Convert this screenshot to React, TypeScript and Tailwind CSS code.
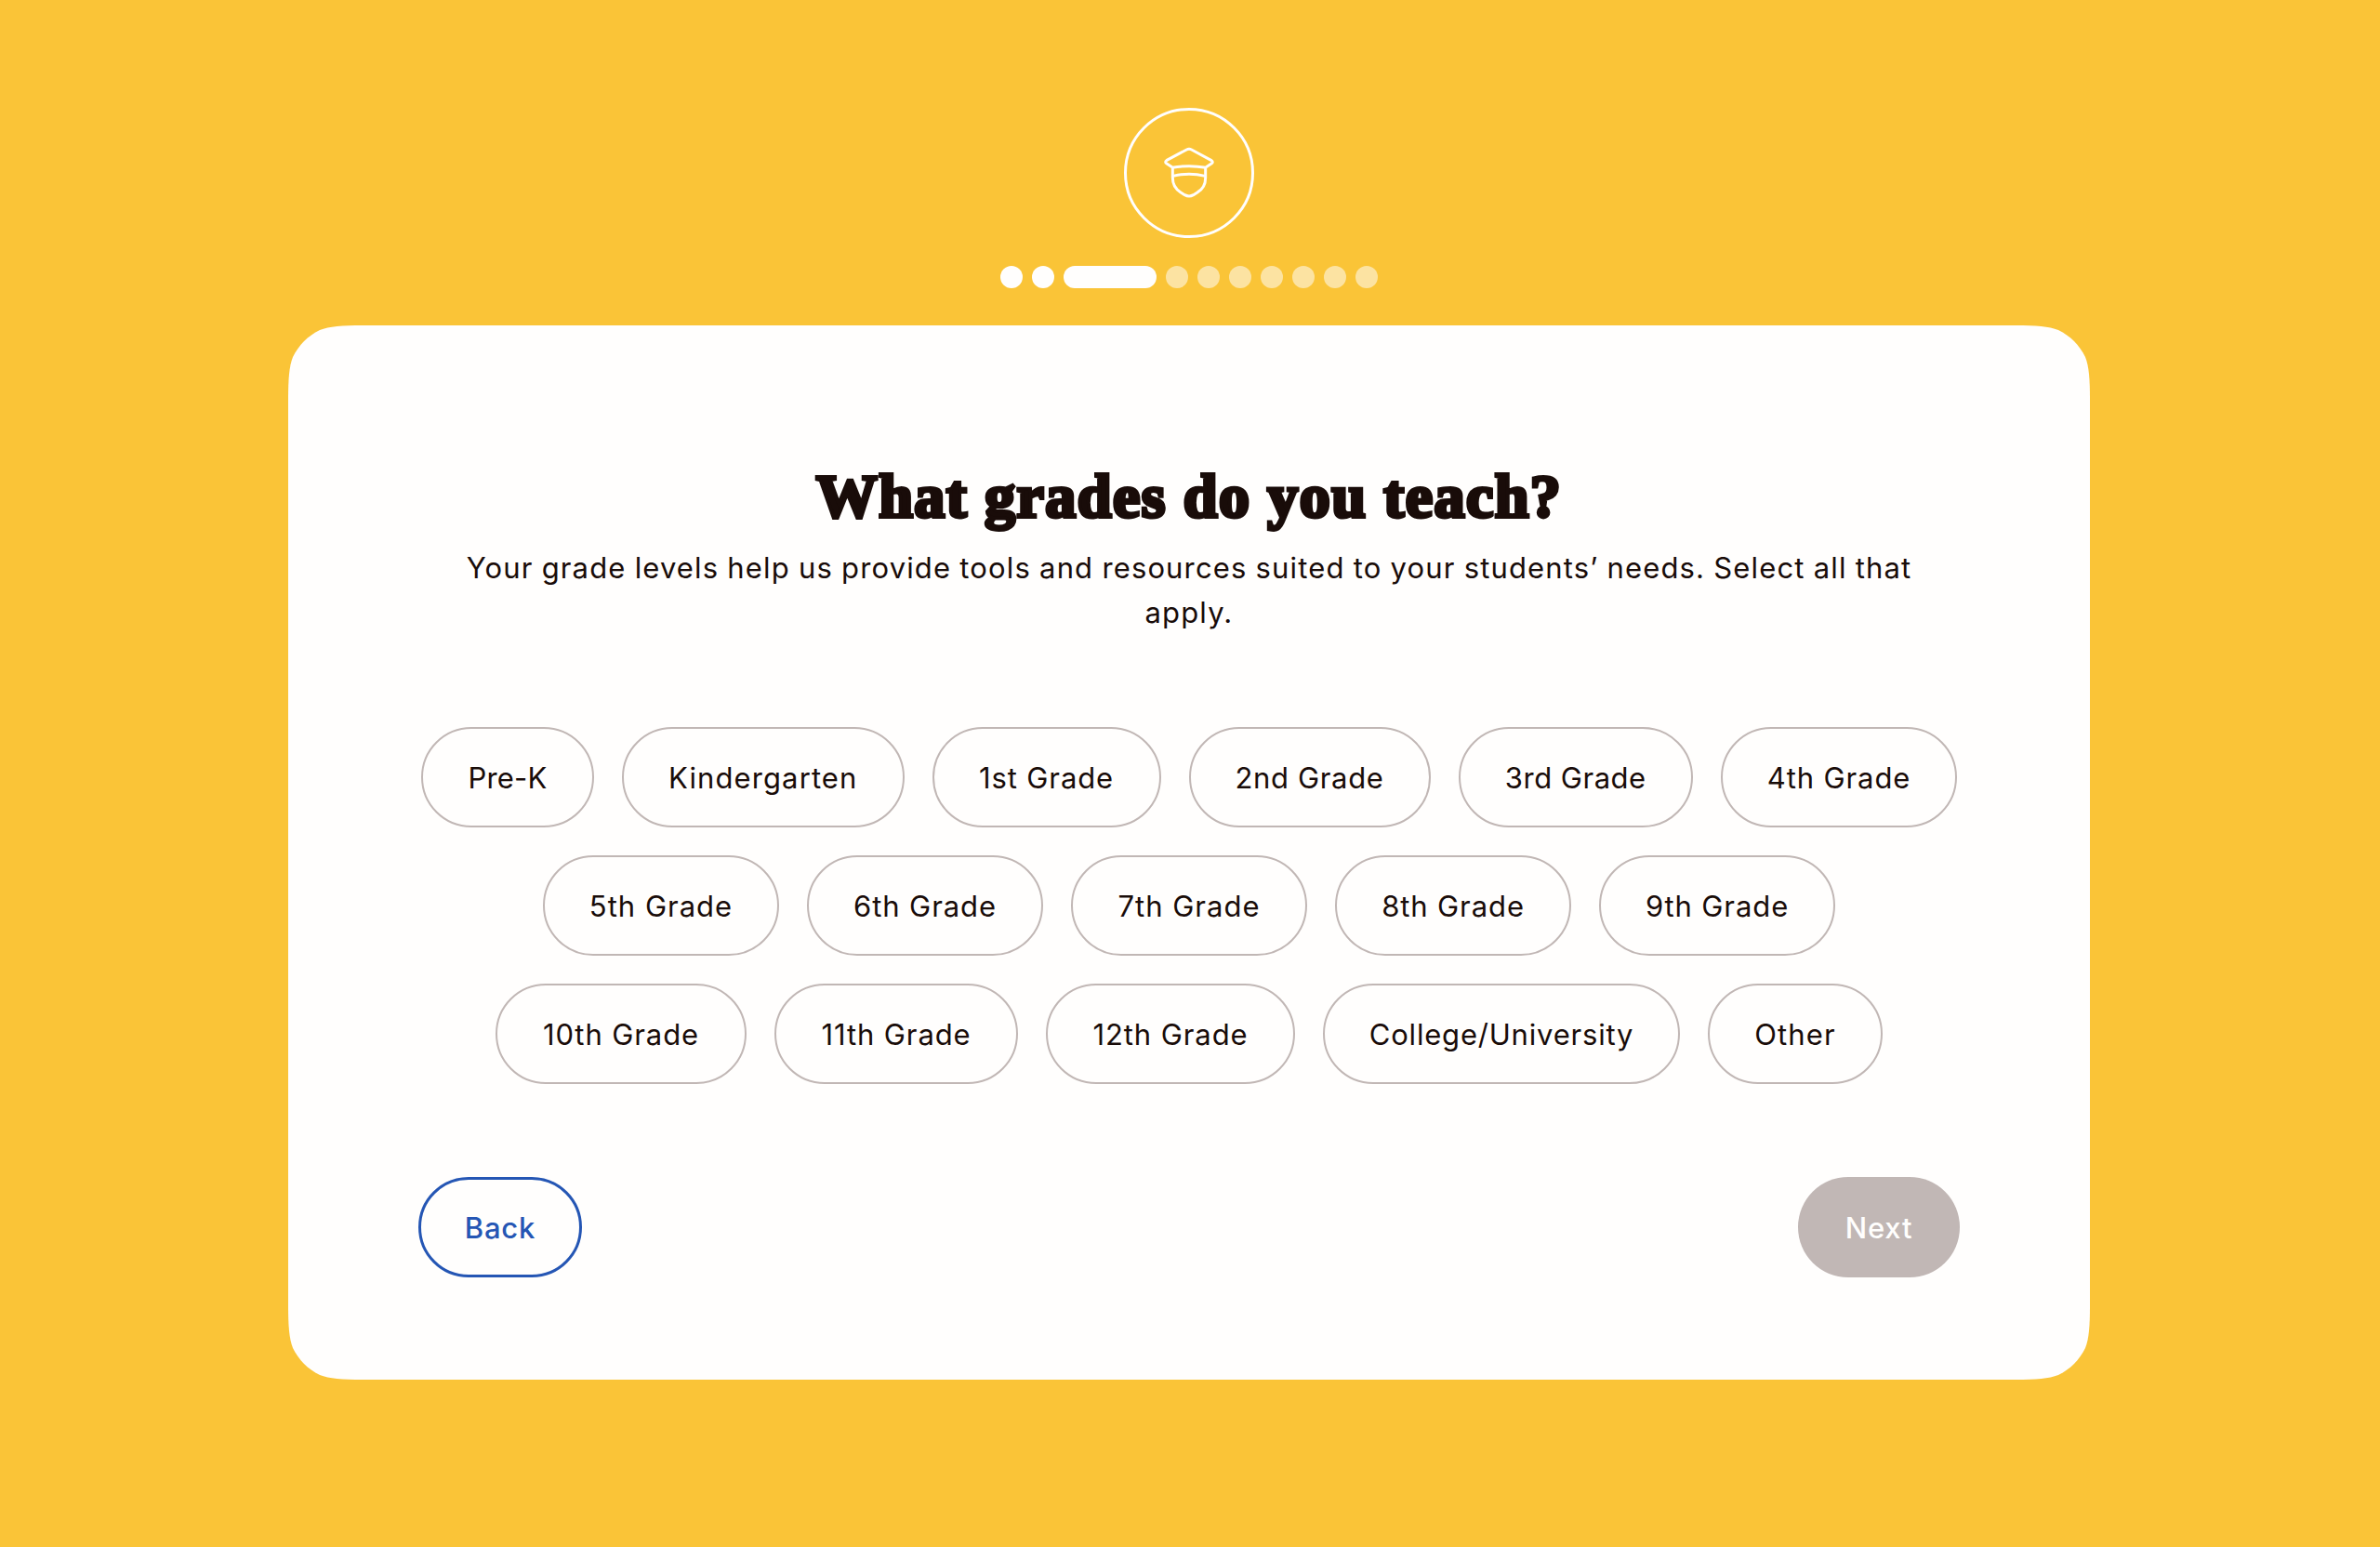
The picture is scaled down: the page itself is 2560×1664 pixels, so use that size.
type Grade = { label: string; className: string };

const gradeRows: Grade[][] = [
  [
    { label: "Pre-K", className: "w-[186px] tracking-[0.2px]" },
    { label: "Kindergarten", className: "w-[303.5px] tracking-[1.1px]" },
    { label: "1st Grade", className: "w-[246px] tracking-[0.9px]" },
    { label: "2nd Grade", className: "w-[260px] tracking-[0.65px]" },
    { label: "3rd Grade", className: "w-[252.5px] tracking-[0.5px]" },
    { label: "4th Grade", className: "w-[254px] tracking-[0.9px]" },
  ],
  [
    { label: "5th Grade", className: "w-[254px] tracking-[1px]" },
    { label: "6th Grade", className: "w-[254px] tracking-[0.9px]" },
    { label: "7th Grade", className: "w-[254px] tracking-[1px]" },
    { label: "8th Grade", className: "w-[254px] tracking-[0.9px]" },
    { label: "9th Grade", className: "w-[254px] tracking-[0.9px]" },
  ],
  [
    { label: "10th Grade", className: "w-[270px] tracking-[0.9px]" },
    { label: "11th Grade", className: "w-[262px] tracking-[0.9px]" },
    { label: "12th Grade", className: "w-[268px] tracking-[0.9px]" },
    { label: "College/University", className: "w-[384px] tracking-[0.8px]" },
    { label: "Other", className: "w-[188px] tracking-[1.1px]" },
  ],
];

const TOTAL_STEPS = 10;
const CURRENT_STEP = 2;

function TeacherBadge() {
  return (
    <svg
      className="size-[140px] text-[#fffefd]"
      viewBox="-108 -102 420 420"
      fill="none"
      stroke="currentColor"
      strokeWidth="9"
      strokeLinejoin="round"
    >
      <circle cx="102" cy="108" r="205.5" />
      <path d="M47 89L30 78Q22 73 30 67L94 33Q102 29 110 33L173 67Q182 73 174 78L157 89" />
      <path d="M48 91Q102 81 156 91" />
      <path d="M50 118Q102 105 154 118" />
      <path d="M49 88V124C49 147 58 160 74 170L88 179Q102 187 116 179L130 170C147 160 155 147 155 124V88" />
    </svg>
  );
}

function Progress() {
  return (
    <div className="mt-[30px] flex gap-2.5">
      {Array.from({ length: TOTAL_STEPS }, (_, i) => (
        <span
          key={i}
          className={
            i === CURRENT_STEP
              ? "h-6 w-25 rounded-full bg-[#fffefd]"
              : i < CURRENT_STEP
                ? "size-6 rounded-full bg-[#fffefd]"
                : "size-6 rounded-full bg-[#fce3a2]"
          }
        />
      ))}
    </div>
  );
}

export default function App() {
  return (
    <main className="flex h-[1664px] w-[2560px] flex-col items-center bg-[#fac437] pt-[116px] pr-0.5 font-['Inter',sans-serif] text-[31px] text-[#190c09]">
      <TeacherBadge />
      <Progress />
      <section className="mt-10 flex h-[1134px] w-[1938px] flex-col bg-[#fffefd] px-[140px] pt-[148px] [clip-path:path('M0_80C0_58_1_44_5_34C11.5_21_21_11.5_34_5C44_1_58_0_80_0H1858C1880_0_1894_1_1904_5C1917_11.5_1926.5_21_1933_34C1937_44_1938_58_1938_80V1054C1938_1076_1937_1090_1933_1100C1926.5_1113_1917_1122.5_1904_1129C1894_1133_1880_1134_1858_1134H80C58_1134_44_1133_34_1129C21_1122.5_11.5_1113_5_1100C1_1090_0_1076_0_1054Z')]">
        <h1 className="text-center font-['Liberation_Serif',serif] text-[66px] leading-[72px] font-bold tracking-[1.45px] [-webkit-text-stroke:4px_#190c09]">
          What grades do you teach?
        </h1>
        <p className="mt-[17px] text-center leading-[48px] tracking-[1.14px] [word-spacing:-0.7px]">
          Your grade levels help us provide tools and resources suited to your students’ needs. Select all that
          <br />
          apply.
        </p>
        <div className="mt-[99px] flex flex-col gap-[30px]">
          {gradeRows.map((row, i) => (
            <div key={i} className="flex justify-center gap-[30px]">
              {row.map(({ label, className }) => (
                <button
                  key={label}
                  className={`flex h-[108px] shrink-0 items-center justify-center rounded-full border-2 border-[#c1b7b5] pt-0.5 whitespace-nowrap ${className}`}
                >
                  {label}
                </button>
              ))}
            </div>
          ))}
        </div>
        <div className="mt-[100px] flex justify-between font-medium">
          <button className="flex h-[108px] w-44 items-center justify-center rounded-full border-3 border-[#2556b4] pt-0.5 tracking-[0.8px] text-[#2556b4]">
            Back
          </button>
          <button className="flex h-[108px] w-[174px] items-center justify-center rounded-full bg-[#c1b7b5] pt-0.5 tracking-[0.8px] text-[#fffefd]">
            Next
          </button>
        </div>
      </section>
    </main>
  );
}
